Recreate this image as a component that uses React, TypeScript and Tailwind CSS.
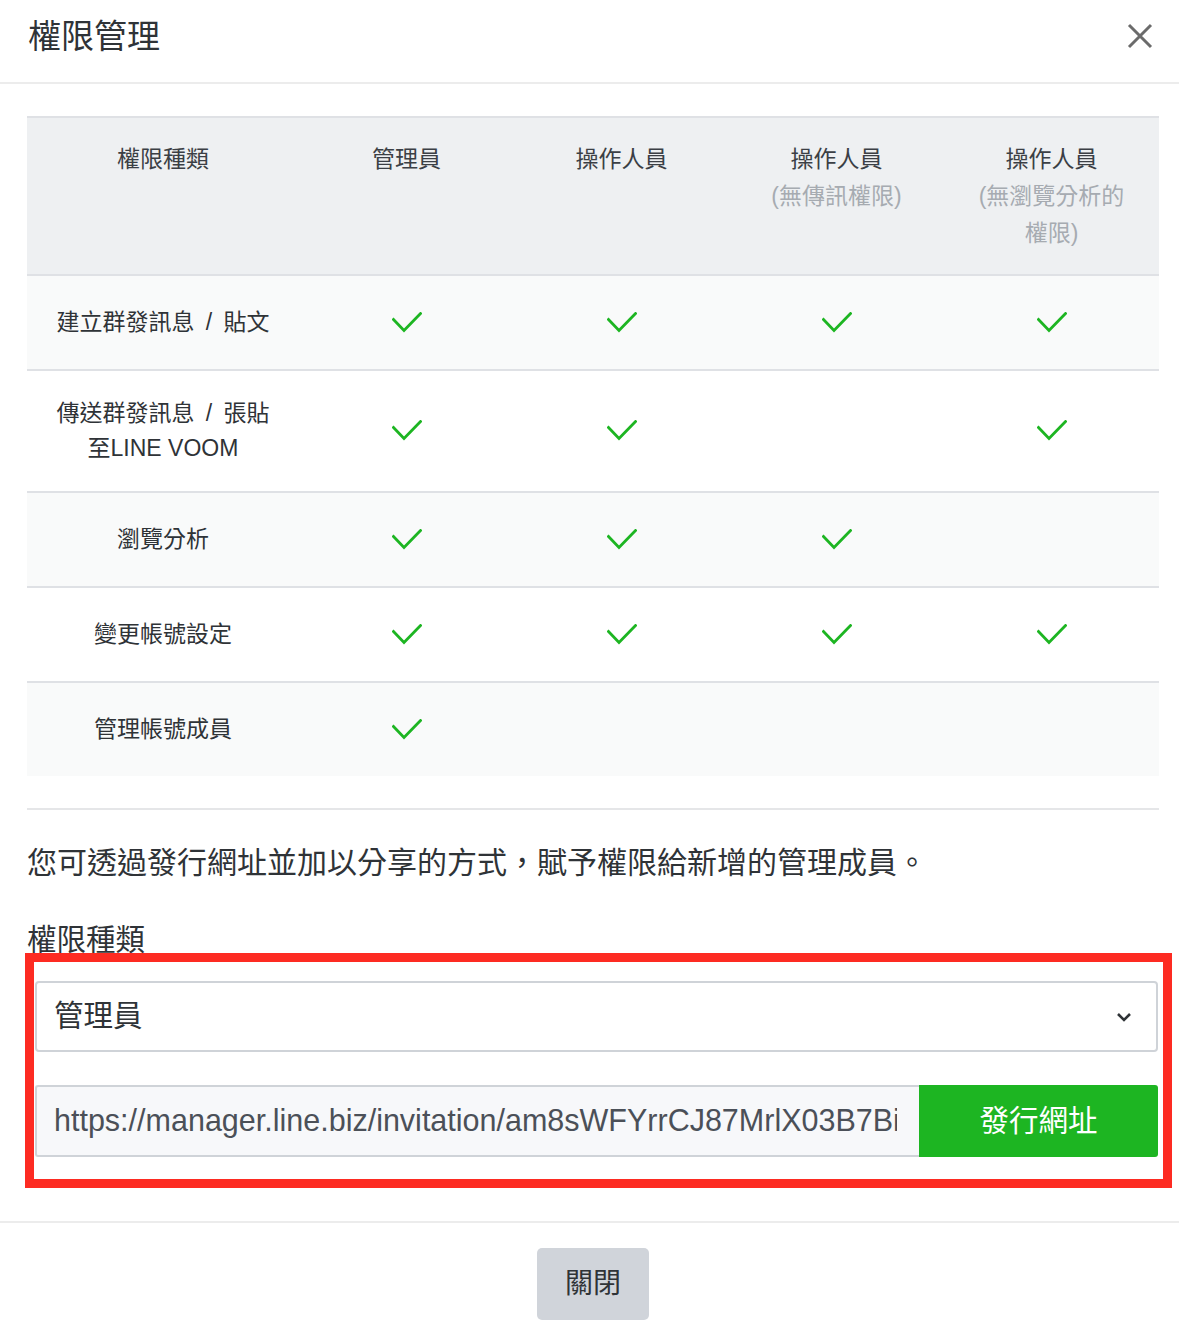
const font = { fontFamily: '"Liberation Sans", "Noto Sans CJK TC", sans-serif' }

type Row = { label: React.ReactNode; checks: boolean[] }

const Slash = () => <span className="px-[5px]"> / </span>

const rows: Row[] = [
  {
    label: (
      <>
        建立群發訊息<Slash />貼文
      </>
    ),
    checks: [true, true, true, true],
  },
  {
    label: (
      <>
        傳送群發訊息<Slash />張貼
        <br />
        至LINE VOOM
      </>
    ),
    checks: [true, true, false, true],
  },
  { label: '瀏覽分析', checks: [true, true, true, false] },
  { label: '變更帳號設定', checks: [true, true, true, true] },
  { label: '管理帳號成員', checks: [true, false, false, false] },
]

function Check() {
  return (
    <svg width="30" height="22" viewBox="0 0 30 22" fill="none">
      <polyline
        points="1.5,7.5 12,18.5 28.5,1.5"
        stroke="#1db522"
        strokeWidth="2.8"
        strokeLinecap="square"
      />
    </svg>
  )
}

function CloseIcon() {
  return (
    <svg width="26" height="26" viewBox="0 0 26 26" fill="none">
      <path d="M2 2 L24 24 M24 2 L2 24" stroke="#6b6b6b" strokeWidth="3" />
    </svg>
  )
}

function Chevron() {
  return (
    <svg width="16" height="10" viewBox="0 0 16 10" fill="none">
      <polyline points="2,2 8,8 14,2" stroke="#2f3337" strokeWidth="2.6" />
    </svg>
  )
}

export default function App() {
  return (
    <div className="w-[1179px] min-h-[1335px] bg-white text-[#2f3337]" style={font}>
      {/* header */}
      <div className="h-[84px] border-b-2 border-[#ececec] flex items-center justify-between pl-[28px] pr-[26px] pb-[8px]">
        <h1 className="text-[33px] leading-[40px]">權限管理</h1>
        <button className="mb-[2px]">
          <CloseIcon />
        </button>
      </div>

      <div className="pl-[27px] pr-[20px] pt-[32px]">
        {/* permission table */}
        <div className="w-[1132px]">
          <div className="grid grid-cols-[272px_215px_215px_215px_215px] border-t-2 border-[#dfe1e5] bg-[#eef0f2] min-h-[158px] text-[23px] leading-[37px] text-[#3b3f45] text-center">
            <div className="pt-[23px]">權限種類</div>
            <div className="pt-[23px]">管理員</div>
            <div className="pt-[23px]">操作人員</div>
            <div className="pt-[23px]">
              操作人員
              <div className="text-[#a6abb1]">(無傳訊權限)</div>
            </div>
            <div className="pt-[23px]">
              操作人員
              <div className="text-[#a6abb1]">
                (無瀏覽分析的
                <br />
                權限)
              </div>
            </div>
          </div>
          {rows.map((row, i) => (
            <div
              key={i}
              className={`grid grid-cols-[272px_215px_215px_215px_215px] border-t-2 border-[#dfe1e5] min-h-[95px] py-[25px] text-[23px] leading-[35px] text-[#2f3337] ${
                i % 2 === 0 ? 'bg-[#f9fafa]' : 'bg-white'
              }`}
            >
              <div className="flex items-center justify-center text-center">
                <div>{row.label}</div>
              </div>
              {row.checks.map((c, j) => (
                <div key={j} className="flex items-center justify-center">
                  {c && <Check />}
                </div>
              ))}
            </div>
          ))}
        </div>

        <div className="mt-[32px] border-t-2 border-[#e5e6e8] w-[1132px]" />

        <p className="mt-[31px] text-[30px] leading-[44px] text-[#2f3337]">
          您可透過發行網址並加以分享的方式，賦予權限給新增的管理成員。
        </p>

        {/* invite form */}
        <div className="relative mt-[33px]">
          <div className="text-[29.5px] leading-[44px]">權限種類</div>

          <div className="ml-[8px] w-[1123px] mt-[19px] h-[71px] border-2 border-[#cfd3d8] rounded-[4px] flex items-center justify-between pl-[17px] pr-[24px]">
            <span className="text-[29.5px]">管理員</span>
            <Chevron />
          </div>

          <div className="ml-[8px] w-[1123px] mt-[33px] h-[72px] flex">
            <div className="flex-1 min-w-0 bg-[#f7f8fa] border-2 border-r-0 border-[#cfd3d8] rounded-l-[3px] flex items-center pl-[17px] pr-[22px] overflow-hidden">
              <span className="text-[30.5px] text-[#4b5058] whitespace-nowrap overflow-hidden">
                https://manager.line.biz/invitation/am8sWFYrrCJ87MrlX03B7Bi
              </span>
            </div>
            <button className="w-[239px] bg-[#1db522] text-white text-[29.5px] rounded-r-[3px]">發行網址</button>
          </div>

          {/* annotation frame */}
          <div className="absolute left-[-2px] top-[35px] w-[1147px] h-[235px] border-[9px] border-[#fd2b22] pointer-events-none" />
        </div>
      </div>

      {/* footer */}
      <div className="mt-[64px] border-t-2 border-[#ececec] pt-[25px] pb-[15px] flex justify-center">
        <button className="ml-[7px] w-[112px] h-[72px] bg-[#d0d4da] rounded-[5px] text-[28px] text-[#2f3337]">關閉</button>
      </div>
    </div>
  )
}
